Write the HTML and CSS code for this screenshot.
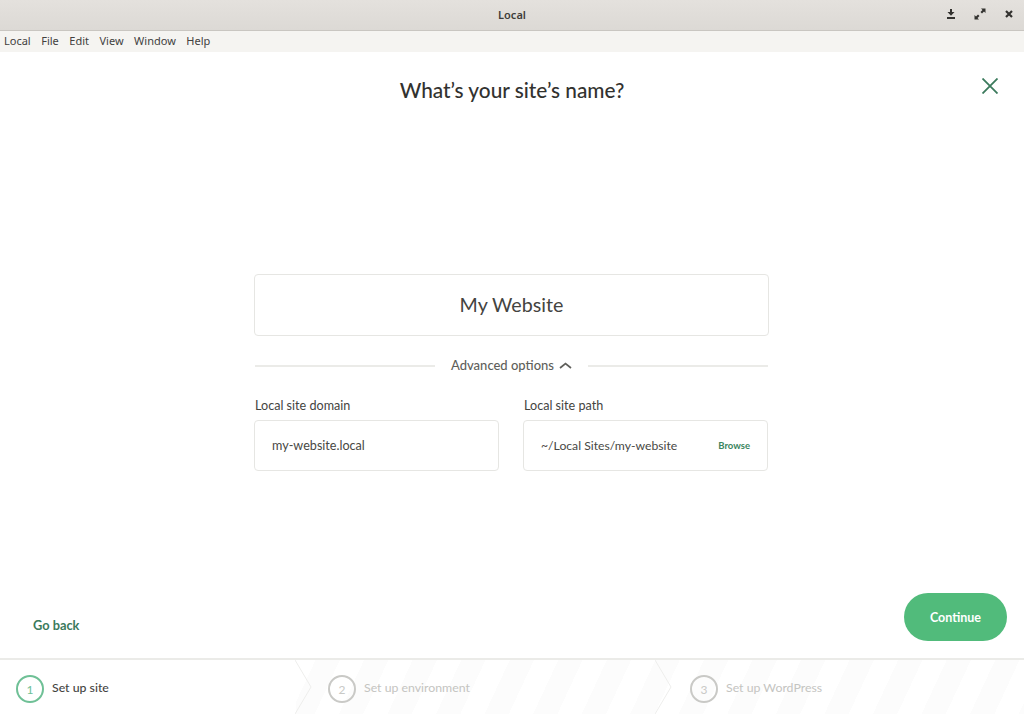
FILE: index.html
```html
<!DOCTYPE html>
<html lang="en">
<head>
<meta charset="utf-8">
<title>Local</title>
<link rel="stylesheet" href="styles.css">
</head>
<body>
<div class="app">
  <header class="titlebar">
    <span class="titlebar-name">Local</span>
    <div class="win-controls">
      <svg class="win-icon" width="10" height="10" viewBox="0 0 10 10"><path d="M4 0h2v3h2.500L5 6.800 1.500 3H4zM1 8h8v2H1z" fill="#33322f"/></svg>
      <svg class="win-icon" width="12" height="12" viewBox="0 0 12 12"><path d="M7 0.500h4.500V5L10 3.500 8 5.500 6.500 4 8.500 2zM5 11.500H.5V7L2 8.500 4 6.500 5.500 8 3.500 10z" fill="#33322f"/></svg>
      <svg class="win-icon" width="10" height="10" viewBox="0 0 10 10"><path d="M2 2l6 6M8 2l-6 6" stroke="#33322f" stroke-width="2.200" fill="none"/></svg>
    </div>
  </header>
  <nav class="menubar">
    <span>Local</span><span>File</span><span>Edit</span><span>View</span><span>Window</span><span>Help</span>
  </nav>
  <main class="content">
    <h1 class="heading">What’s your site’s name?</h1>
    <svg class="close" width="16" height="16" viewBox="0 0 16 16"><path d="M.5.5l15 15M15.500.5l-15 15" stroke="#3b7a5c" stroke-width="1.800" fill="none"/></svg>
    <div class="form">
      <div class="name-box">My Website</div>
      <div class="divider">
        <span class="rule"></span>
        <span class="adv">Advanced options
          <svg width="13" height="7" viewBox="0 0 13 7"><path d="M1 6l5.500-4.500L12 6" stroke="#5f5f5b" stroke-width="1.700" fill="none"/></svg>
        </span>
        <span class="rule"></span>
      </div>
      <div class="fields">
        <div class="field">
          <label class="label">Local site domain</label>
          <div class="input">my-website.local</div>
        </div>
        <div class="field">
          <label class="label">Local site path</label>
          <div class="input"><span class="path">~/Local Sites/my-website</span><span class="browse">Browse</span></div>
        </div>
      </div>
    </div>
    <div class="actions">
      <a class="back">Go back</a>
      <button class="continue">Continue</button>
    </div>
  </main>
  <footer class="steps">
    <div class="step step-active">
      <span class="num">1</span><span class="step-text">Set up site</span>
      <svg class="chev" width="18" height="54" viewBox="0 0 18 54"><path d="M0 0l16 27L0 54" stroke="#eeeeec" fill="none"/></svg>
    </div>
    <div class="step step-mid">
      <span class="num">2</span><span class="step-text">Set up environment</span>
      <svg class="chev" width="18" height="54" viewBox="0 0 18 54"><path d="M0 0l16 27L0 54" stroke="#eeeeec" fill="none"/></svg>
    </div>
    <div class="step step-last">
      <span class="num">3</span><span class="step-text">Set up WordPress</span>
    </div>
  </footer>
</div>
</body>
</html>
```
FILE: styles.css
```css
* { box-sizing: border-box; }
html, body { margin: 0; height: 100%; }
body { font-family: "Lato", "Noto Sans", sans-serif; color: #3a3a37; background: #fff; }
.app { width: 1024px; height: 714px; display: flex; flex-direction: column; overflow: hidden; }

.titlebar { position: relative; height: 31px; flex: none; padding-bottom: 2px; background: linear-gradient(#e4e1dd, #dcd9d5); border-bottom: 1px solid #c9c6c1; display: flex; align-items: center; justify-content: center; }
.titlebar-name { font: 600 11px "Noto Sans", sans-serif; color: #3f3e3b; }
.win-controls { position: absolute; right: 10px; top: 8px; display: flex; align-items: center; gap: 18px; }
.win-icon { display: block; }

.menubar { height: 21px; flex: none; padding: 0 4px 2px; background: #f5f4f1; display: flex; align-items: center; gap: 10.5px; font: 11px "Noto Sans", sans-serif; color: #42413e; }

.content { position: relative; flex: 1; min-height: 0; display: flex; flex-direction: column; align-items: center; }
.heading { margin: 24px 0 0; height: 28px; font-size: 20.8px; line-height: 28px; font-weight: 500; color: #32322f; }
.close { position: absolute; top: 26px; right: 26px; }

.form { width: 515px; margin-top: 170px; margin-left: -1px; }
.name-box { height: 62px; padding-bottom: 2px; border: 1px solid #e6e6e3; border-radius: 4px; display: flex; align-items: center; justify-content: center; font-size: 19.700px; color: #44443f; }
.divider { display: flex; align-items: center; gap: 16px; height: 20px; margin-top: 19px; padding: 0 1px; }
.rule { flex: 1; height: 2px; margin-top: 2px; background: #ebebe8; }
.adv { display: flex; align-items: center; gap: 5px; font-size: 13px; font-weight: 500; color: #5f5f5b; }
.fields { width: 514px; display: flex; gap: 24px; margin-top: 22px; }
.field { flex: 1; min-width: 0; }
.label { display: block; height: 17px; line-height: 17px; font-size: 12.600px; color: #44443f; padding-left: 1px; }
.input { height: 51px; margin-top: 6px; border: 1px solid #e6e6e3; border-radius: 4px; padding: 0 17px; display: flex; align-items: center; justify-content: space-between; font-size: 12.600px; color: #484844; }
.path { font-size: 12.200px; }
.browse { font-size: 9.500px; font-weight: 700; color: #3a8560; }

.actions { margin-top: auto; width: 100%; display: flex; align-items: center; justify-content: space-between; padding: 0 17px 17px 33px; }
.back { margin-top: 16px; font-size: 12.800px; font-weight: 700; color: #3b7a5c; }
.continue { width: 103px; height: 48px; border: 0; border-radius: 24px; background: #51bb7b; color: #fff; font: 700 12.500px "Lato", sans-serif; }

.steps { height: 56px; flex: none; border-top: 2px solid #ebebe8; display: flex; background: repeating-linear-gradient(115deg, #fff 0 22px, #fcfcfc 22px 44px); }
.step { position: relative; padding-top: 4px; display: flex; align-items: center; gap: 8px; font-size: 12.300px; color: #c4c4c1; }
.step-active { width: 296px; flex: none; padding-left: 16px; background: #fff; color: #44443f; }
.step-active .step-text { font-weight: 500; }
.step-active .num { border-color: #6fc096; color: #6fc096; }
.step-mid { width: 360px; flex: none; padding-left: 32px; }
.step-last { flex: 1; padding-left: 34px; }
.num { width: 28px; height: 28px; flex: none; border: 2px solid #c9c9c6; border-radius: 50%; display: flex; align-items: center; justify-content: center; font-size: 12px; color: #c9c9c6; }
.step-text { position: relative; top: -2px; }
.chev { position: absolute; right: -17px; top: 0; }
```
